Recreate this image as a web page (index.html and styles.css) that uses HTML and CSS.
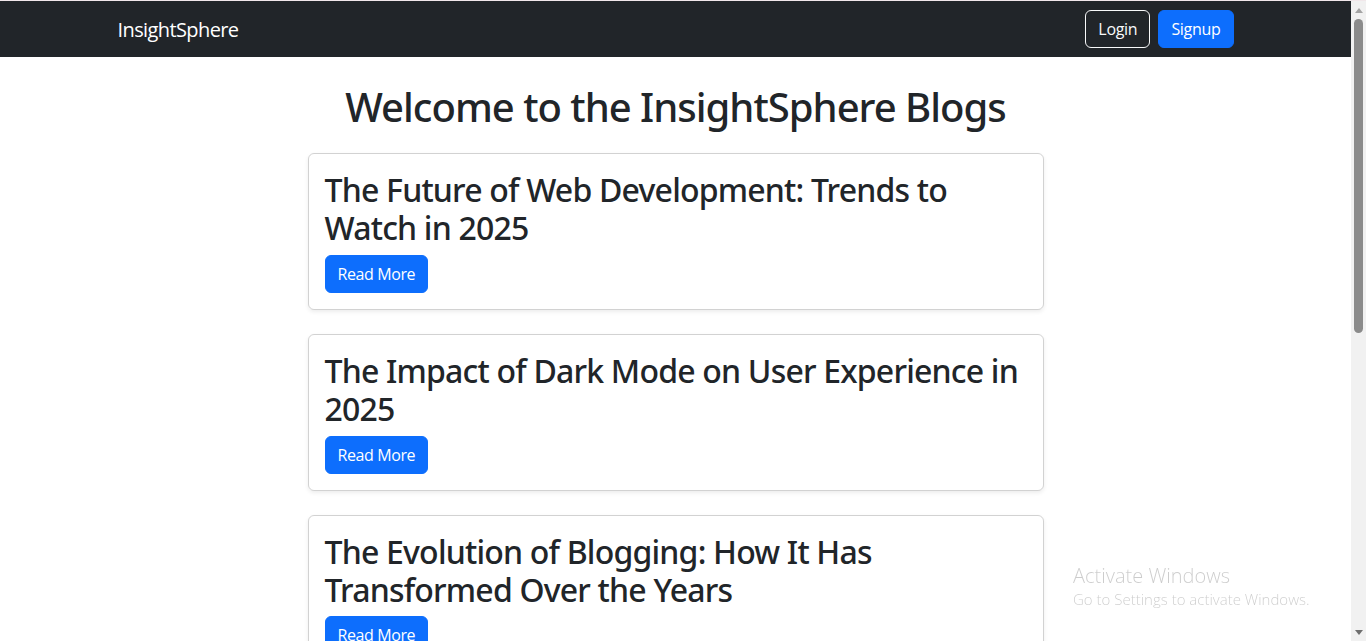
FILE: index.html
```html
<!DOCTYPE html>
<html lang="en">
<head>
<meta charset="utf-8">
<title>InsightSphere Blogs</title>
<link rel="stylesheet" href="styles.css">
</head>
<body>
<div class="screen">
  <div class="page">
    <nav class="navbar">
      <div class="container nav-inner">
        <a class="brand" href="#">InsightSphere</a>
        <div class="nav-actions">
          <a class="btn btn-outline-light" href="#">Login</a>
          <a class="btn btn-primary" href="#">Signup</a>
        </div>
      </div>
    </nav>
    <main class="content">
      <h1 class="page-title">Welcome to the InsightSphere Blogs</h1>
      <div class="card">
        <h2 class="card-title">The Future of Web Development: Trends to Watch in 2025</h2>
        <div><a class="btn btn-primary" href="#">Read More</a></div>
      </div>
      <div class="card">
        <h2 class="card-title">The Impact of Dark Mode on User Experience in 2025</h2>
        <div><a class="btn btn-primary" href="#">Read More</a></div>
      </div>
      <div class="card">
        <h2 class="card-title">The Evolution of Blogging: How It Has Transformed Over the Years</h2>
        <div><a class="btn btn-primary" href="#">Read More</a></div>
      </div>
    </main>
  </div>
  <div class="scrollbar">
    <div class="arrow arrow-up"></div>
    <div class="track">
      <div class="thumb"></div>
    </div>
    <div class="arrow arrow-down"></div>
  </div>
</div>
<div class="watermark">
  <div class="wm-title">Activate Windows</div>
  <div class="wm-sub">Go to Settings to activate Windows.</div>
</div>
</body>
</html>
```
FILE: styles.css
```css
* { box-sizing: border-box; }
html, body { margin: 0; padding: 0; height: 100%; overflow: hidden; }
body {
  font-family: "Open Sans", "Noto Sans", sans-serif;
  color: #212529;
  background: #fff;
}
.screen {
  display: flex;
  height: 641px;
  border-top: 1px solid #f1e7ea;
}
.page {
  flex: 1;
  min-width: 0;
  overflow: hidden;
}
.navbar {
  background: #212529;
  height: 56px;
  display: flex;
  align-items: center;
}
.container {
  width: 1140px;
  margin: 0 auto;
  padding: 0 12px;
}
.nav-inner {
  display: flex;
  align-items: center;
  justify-content: space-between;
}
.brand {
  color: #fff;
  text-decoration: none;
  font-size: 20px;
  letter-spacing: -0.6px;
  line-height: 30px;
  margin-top: 2px;
}
.nav-actions {
  display: flex;
  gap: 8px;
}
.btn {
  display: inline-block;
  font-size: 16px;
  line-height: 24px;
  padding: 6px 12px;
  border-radius: 6px;
  border: 1px solid transparent;
  text-decoration: none;
  letter-spacing: -0.3px;
}
.btn-primary {
  background: #0d6efd;
  border-color: #0d6efd;
  color: #fff;
}
.btn-outline-light {
  color: #f8f9fa;
  border-color: #f8f9fa;
  background: transparent;
}
.content {
  padding-top: 26px;
}
.page-title,
.card-title {
  font-family: "Noto Sans", "Open Sans", sans-serif;
  font-weight: 500;
}
.page-title {
  margin: 0 0 22px;
  text-align: center;
  font-size: 40px;
  line-height: 48px;
  letter-spacing: -1px;
}
.card {
  width: 736px;
  margin: 0 auto 24px;
  border: 1px solid rgba(0, 0, 0, 0.175);
  border-radius: 6px;
  box-shadow: 0 2px 4px rgba(0, 0, 0, 0.075);
  padding: 16px;
}
.card-title {
  margin: 0 0 8px;
  padding-top: 1px;
  height: 76.8px;
  font-size: 32px;
  line-height: 38.4px;
  letter-spacing: -0.8px;
}
.card .btn {
  letter-spacing: -0.4px;
}
.scrollbar {
  width: 15px;
  flex: none;
  background: #f1f1f1;
  display: flex;
  flex-direction: column;
  align-items: center;
}
.arrow {
  width: 0;
  height: 0;
  border-left: 4.5px solid transparent;
  border-right: 4.5px solid transparent;
}
.arrow-up {
  margin-top: 7px;
  border-bottom: 5px solid #a3a3a3;
}
.track {
  flex: 1;
  width: 100%;
  display: flex;
  justify-content: center;
}
.thumb {
  margin-top: 6px;
  width: 9px;
  height: 314px;
  background: #8b8b8b;
  border-radius: 4.5px;
}
.arrow-down {
  margin-bottom: 6px;
  border-top: 5px solid #6f6f6f;
}
.watermark {
  position: fixed;
  left: 1073px;
  top: 562px;
  color: rgba(0, 0, 0, 0.2);
  font-family: "Open Sans", "Noto Sans", sans-serif;
}
.wm-title {
  font-size: 20px;
  line-height: 27px;
  font-weight: 300;
}
.wm-sub {
  font-size: 15px;
  line-height: 20px;
  font-weight: 300;
}
```
